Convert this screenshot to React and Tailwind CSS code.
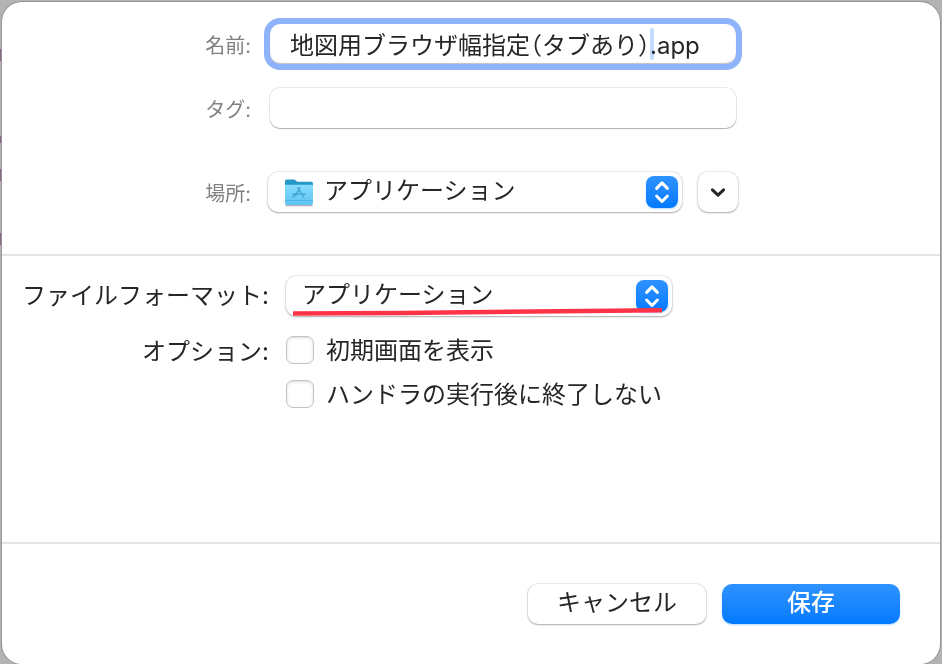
import React from "react";

const controlShadow =
  "shadow-[0_0_0_1px_rgba(0,0,0,0.07),0_1px_2px_rgba(0,0,0,0.28)]";
const fieldShadow =
  "shadow-[0_0_0_1px_rgba(0,0,0,0.08),0_1px_1px_rgba(0,0,0,0.25)]";

function Knob() {
  return (
    <span className="pointer-events-none absolute top-1 right-1 size-8 rounded-lg bg-linear-to-b from-[#2d92ff] to-[#007aff] shadow-[0_1px_2px_rgba(0,122,255,0.3)]">
      <svg viewBox="0 0 32 32" className="size-8" aria-hidden="true">
        <path
          d="M10.6 12.4 16 6.9l5.4 5.5M10.6 20l5.4 5.5 5.4-5.5"
          fill="none"
          stroke="#fff"
          strokeWidth="3"
          strokeLinecap="round"
          strokeLinejoin="round"
        />
      </svg>
    </span>
  );
}

function FolderIcon() {
  return (
    <svg
      viewBox="0 0 30 30"
      className="pointer-events-none absolute top-[6px] left-4 size-[30px]"
      aria-hidden="true"
    >
      <defs>
        <linearGradient id="folder-front" x1="0" y1="0" x2="0" y2="1">
          <stop offset="0" stopColor="#85dbfd" />
          <stop offset="1" stopColor="#5fc4f3" />
        </linearGradient>
      </defs>
      <path d="M2 27.6h26" stroke="#000" strokeOpacity="0.3" strokeWidth="1.4" strokeLinecap="round" />
      <path
        d="M1 3Q1 1.400 2.600 1.400h7.200q1 0 1.800.8l1 1q.6.6 1.600.6h13.200Q29 3.800 29 5.400V12H1z"
        fill="#2699c9"
      />
      <path d="M1 8Q1 6.800 2.200 6.800h25.600Q29 6.800 29 8v17.200q0 1.800-1.800 1.800H2.800Q1 27 1 25.200z" fill="url(#folder-front)" />
      <path d="M1 22.500h28" stroke="#3fa9dc" strokeWidth="1" opacity="0.6" />
      <path
        d="M13.800 9.800l5.600 9.200M15.800 9.800l-4.600 7.800M8.600 16.200h6.800M18 16.200h3M9.900 18.200l-.6 1"
        fill="none"
        stroke="#3da4d6"
        strokeWidth="1.400"
        strokeLinecap="round"
      />
    </svg>
  );
}

function CheckRow({ id, children }) {
  return (
    <div className="flex h-7 items-center gap-3">
      <input
        id={id}
        type="checkbox"
        className="size-7 shrink-0 appearance-none rounded-[7px] border border-[#c4c4c4] bg-white shadow-[inset_0_1px_3px_rgba(0,0,0,0.14)] checked:bg-[#007aff]"
      />
      <label htmlFor={id} className="pt-0.5 whitespace-nowrap">
        {children}
      </label>
    </div>
  );
}

export default function App() {
  const topLabel = "w-[249px] shrink-0 pt-1 text-right text-xl text-[#808080]";
  const formLabel = "w-[267px] shrink-0 text-right";

  return (
    <div className="relative flex min-h-screen flex-col bg-[#b3b3b3] px-0.5 pt-0.5 font-['Inter','Noto_Sans_CJK_JP',sans-serif] text-2xl leading-8 text-[#262626]">
      <span className="absolute top-[49px] left-0 h-3 w-0.5 bg-[#8b6485]" />
      <span className="absolute top-[136px] left-0 h-[7px] w-0.5 bg-[#8b6485]" />
      <span className="absolute top-[169px] left-0 h-3 w-0.5 bg-[#8b6485]" />
      <span className="absolute top-[233px] left-0 h-3 w-0.5 bg-[#8b6485]" />

      <form
        className="relative flex grow flex-col rounded-[20px] bg-white shadow-[0_0_0_1px_#959595]"
        onSubmit={(e) => e.preventDefault()}
      >
        <section className="flex flex-col border-b-2 border-[#e5e5e5] pt-[22px] pb-[42px]">
          <div className="flex items-center gap-[17px]">
            <label htmlFor="name" className={topLabel}>
              名前:
            </label>
            <div className="w-[470px] px-0.5">
              <div className="relative">
                <input
                  id="name"
                  type="text"
                  defaultValue="地図用ブラウザ幅指定（タブあり）.app"
                  className="block h-10 w-full rounded-[10px] bg-white px-5 pb-[2px] shadow-[inset_0_-1px_1px_rgba(0,0,0,0.25)] ring-6 ring-[#8eb3fc] outline-none [font-feature-settings:'halt']"
                />
                <span className="pointer-events-none absolute top-1 left-[380px] h-8 w-1 rounded-full bg-[#c4dcff] mix-blend-multiply" />
              </div>
            </div>
          </div>

          <div className="mt-6 flex items-center gap-[17px]">
            <label htmlFor="tags" className={topLabel}>
              タグ:
            </label>
            <div className="w-[470px] px-0.5">
              <input
                id="tags"
                type="text"
                className={`block h-10 w-full rounded-[10px] bg-white px-5 outline-none ${fieldShadow}`}
              />
            </div>
          </div>

          <div className="mt-11 flex items-center gap-[17px]">
            <label htmlFor="place" className={topLabel}>
              場所:
            </label>
            <div className="flex w-[470px] gap-4">
              <div className="relative grow">
                <select
                  id="place"
                  className={`block h-10 w-full appearance-none rounded-[10px] bg-white pb-[2px] pl-14 outline-none ${controlShadow}`}
                >
                  <option>アプリケーション</option>
                </select>
                <FolderIcon />
                <Knob />
              </div>
              <button
                type="button"
                aria-label="展開"
                className={`flex size-10 items-center justify-center rounded-[10px] bg-white ${controlShadow}`}
              >
                <svg viewBox="0 0 16 16" className="size-4" aria-hidden="true">
                  <path
                    d="M2.400 5.800 8 11.200l5.600-5.400"
                    fill="none"
                    stroke="#262626"
                    strokeWidth="3"
                    strokeLinecap="round"
                    strokeLinejoin="round"
                  />
                </svg>
              </button>
            </div>
          </div>
        </section>

        <section className="flex grow flex-col border-b-2 border-[#e5e5e5] pt-5">
          <div className="flex items-center gap-[17px]">
            <label htmlFor="format" className={formLabel}>
              ファイルフォーマット:
            </label>
            <div className="relative w-[386px]">
              <select
                id="format"
                className={`block h-10 w-full appearance-none rounded-[10px] bg-white pb-[2px] pl-4 outline-none ${controlShadow}`}
              >
                <option>アプリケーション</option>
              </select>
              <Knob />
              <svg
                viewBox="0 0 370 10"
                className="pointer-events-none absolute top-[31px] left-[7px] h-[10px] w-[370px]"
                aria-hidden="true"
              >
                <path d="M0 6.500 110 6 240 4.500 369 3.300" fill="none" stroke="#ff3348" strokeWidth="4.600" />
              </svg>
            </div>
          </div>

          <div className="mt-5 flex gap-[17px]">
            <span className={formLabel}>オプション:</span>
            <div className="flex flex-col gap-4">
              <CheckRow id="startup">初期画面を表示</CheckRow>
              <CheckRow id="stay-open">ハンドラの実行後に終了しない</CheckRow>
            </div>
          </div>
        </section>

        <footer className="flex justify-end gap-4 pt-10 pr-10 pb-10">
          <button
            type="button"
            className={`h-10 w-[178px] rounded-[10px] bg-white pb-[2px] ${controlShadow}`}
          >
            キャンセル
          </button>
          <button
            type="submit"
            className="h-10 w-[178px] rounded-[10px] bg-linear-to-b from-[#2d92ff] to-[#007aff] pb-[2px] font-medium text-white shadow-[0_1px_2px_rgba(0,122,255,0.3)]"
          >
            保存
          </button>
        </footer>
      </form>
    </div>
  );
}
